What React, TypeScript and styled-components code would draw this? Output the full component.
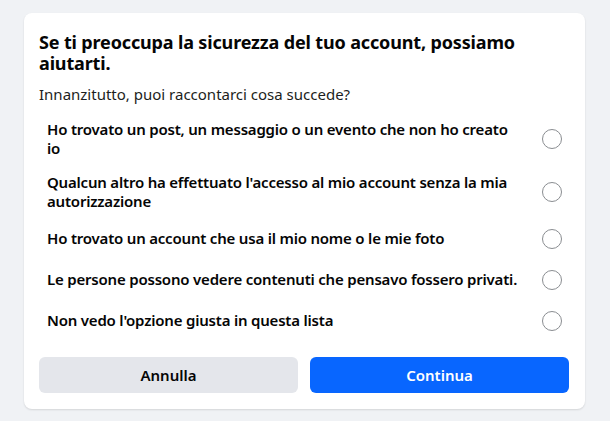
import { useState } from "react"
import styled, { createGlobalStyle } from "styled-components"

const GlobalStyle = createGlobalStyle`
  html, body {
    margin: 0;
    padding: 0;
    background: #f0f2f5;
    font-family: "Noto Sans", "Open Sans", Arial, sans-serif;
    -webkit-font-smoothing: antialiased;
  }
`

const Page = styled.div`
  padding: 13px 25px 12px 24px;
`

const Card = styled.div`
  background: #ffffff;
  border-radius: 8px;
  box-shadow: 0 1px 2px rgba(0, 0, 0, 0.12);
  padding: 19px 16px 16px 15px;
`

const Title = styled.h2`
  margin: 0;
  font-size: 18px;
  line-height: 21px;
  letter-spacing: -0.15px;
  font-weight: 700;
  color: #050505;
`

const Subtitle = styled.p`
  margin: 10px 0 8px;
  font-size: 15px;
  line-height: 20px;
  color: #1c1e21;
`

const OptionList = styled.div`
  display: flex;
  flex-direction: column;
`

const OptionRow = styled.label`
  display: flex;
  align-items: center;
  min-height: 41px;
  box-sizing: border-box;
  padding: 8px 7px 8px 8px;
  cursor: pointer;
`

const OptionText = styled.span`
  flex: 1;
  font-size: 15px;
  line-height: 18.5px;
  letter-spacing: -0.2px;
  font-weight: 600;
  color: #050505;
  padding-right: 21px;
`

const Radio = styled.span<{ checked: boolean }>`
  flex: none;
  width: 20px;
  height: 20px;
  box-sizing: border-box;
  border-radius: 50%;
  border: ${({ checked }) =>
    checked ? "6px solid #0866ff" : "1.5px solid #8a8d91"};
`

const Actions = styled.div`
  display: grid;
  grid-template-columns: 1fr 1fr;
  gap: 12px;
  margin-top: 16px;
`

const Button = styled.button<{ primary?: boolean }>`
  height: 36px;
  border: none;
  border-radius: 6px;
  font-family: inherit;
  font-size: 15px;
  font-weight: 600;
  cursor: pointer;
  background: ${({ primary }) => (primary ? "#0866ff" : "#e4e6eb")};
  color: ${({ primary }) => (primary ? "#ffffff" : "#050505")};
`

const options = [
  "Ho trovato un post, un messaggio o un evento che non ho creato io",
  "Qualcun altro ha effettuato l'accesso al mio account senza la mia autorizzazione",
  "Ho trovato un account che usa il mio nome o le mie foto",
  "Le persone possono vedere contenuti che pensavo fossero privati.",
  "Non vedo l'opzione giusta in questa lista",
]

export default function App() {
  const [selected, setSelected] = useState<number | null>(null)

  return (
    <Page>
      <GlobalStyle />
      <Card>
        <Title>
          Se ti preoccupa la sicurezza del tuo account, possiamo aiutarti.
        </Title>
        <Subtitle>Innanzitutto, puoi raccontarci cosa succede?</Subtitle>
        <OptionList>
          {options.map((text, i) => (
            <OptionRow key={i} onClick={() => setSelected(i)}>
              <OptionText>{text}</OptionText>
              <Radio checked={selected === i} />
            </OptionRow>
          ))}
        </OptionList>
        <Actions>
          <Button>Annulla</Button>
          <Button primary>Continua</Button>
        </Actions>
      </Card>
    </Page>
  )
}
